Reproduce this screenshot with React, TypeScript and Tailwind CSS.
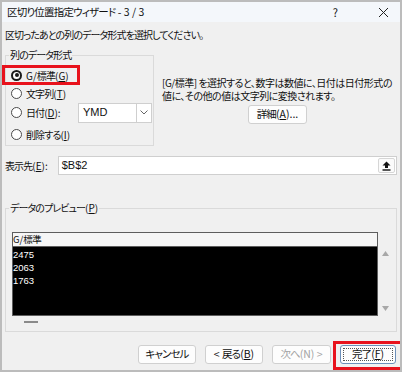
import React from "react";

const jp = "font-['Noto_Sans_CJK_JP','Noto_Sans',sans-serif] [font-feature-settings:'palt']";

function J({ children }: { children: React.ReactNode }) {
  return <span className="tracking-[-0.9px]">{children}</span>;
}

function Radio({ checked }: { checked?: boolean }) {
  if (checked) {
    return (
      <span className="w-[11px] h-[11px] rounded-full border-[2px] border-[#1a1a1a] bg-white flex items-center justify-center shrink-0">
        <span className="w-[4px] h-[4px] rounded-full bg-[#1a1a1a]" />
      </span>
    );
  }
  return <span className="w-[11px] h-[11px] rounded-full border border-[#4a4a4a] bg-white shrink-0" />;
}

function U({ children }: { children: React.ReactNode }) {
  return <span className="underline underline-offset-[1px]">{children}</span>;
}

function Btn({
  children,
  w,
  disabled,
  def,
}: {
  children: React.ReactNode;
  w: string;
  disabled?: boolean;
  def?: boolean;
}) {
  return (
    <div
      className={`${w} h-[19px] rounded-[3px] border ${
        def ? "border-[#6d8fb8]" : "border-[#d0d0d0]"
      } bg-[#fdfdfd] flex items-center justify-center text-[10.5px] leading-none whitespace-pre ${
        disabled ? "text-[#a3a3a3]" : "text-[#111]"
      } relative`}
    >
      {def && <span className="absolute inset-[2px] border border-dotted border-[#555]" />}
      <span className="relative">{children}</span>
    </div>
  );
}

export default function App() {
  return (
    <div
      className={`w-[402px] h-[372px] overflow-hidden border-[2px] border-[#bcbcbc] bg-[#f0f0f0] text-[#111] ${jp} text-[10px] flex flex-col`}
    >
      {/* title bar */}
      <div className="h-[20px] bg-[#f4f7fb] flex items-center pl-[5px] shrink-0">
        <span className="leading-[14px] text-[10.5px] whitespace-pre">
          <span className="tracking-[-0.8px]">区切り位置指定ウィザード</span> - 3 / 3
        </span>
        <span className="ml-auto mr-[40px] text-[11px] leading-none">?</span>
        <svg width="11" height="11" viewBox="0 0 11 11" className="mr-[11px]">
          <path d="M1 1 L10 10 M10 1 L1 10" stroke="#222" strokeWidth="1" />
        </svg>
      </div>

      <div className="flex flex-col px-[3px]">
        <div className="mt-[6px] leading-[14px]">
          <J>区切ったあとの列のデータ形式を選択してください。</J>
        </div>

        {/* group 1 + description */}
        <div className="mt-[6px] flex items-start">
          <fieldset className="w-[149px] border border-[#dadada] p-0 m-0 shrink-0">
            <legend className="ml-[3px] px-[1px] leading-[14px]">
              <J>列のデータ形式</J>
            </legend>
            <div className="pl-[5px] pt-[3px] pb-[1px] flex flex-col">
              <div className="h-[20px] flex items-center gap-[4px] relative">
                <span className="absolute left-[-9px] top-0 w-[78px] h-[20px] border-[3px] border-[#e8121c]" />
                <Radio checked />
                <span>
                  G/<J>標準</J>(<U>G</U>)
                </span>
              </div>
              <div className="h-[17px] flex items-center gap-[4px]">
                <Radio />
                <span>
                  <J>文字列</J>(<U>T</U>)
                </span>
              </div>
              <div className="h-[21px] flex items-center">
                <Radio />
                <span className="ml-[4px] w-[52px]">
                  <J>日付</J>(<U>D</U>):
                </span>
                <div className="w-[74px] h-[20px] bg-white border border-[#cfcfcf] flex items-center">
                  <span className="pl-[4px] flex-1 text-[11px] font-['Liberation_Sans',sans-serif]">YMD</span>
                  <span className="w-[15px] h-full border-l border-[#cfcfcf] flex items-center justify-center">
                    <svg width="8" height="5" viewBox="0 0 8 5">
                      <path d="M0.5 0.5 L4 4 L7.5 0.5" stroke="#666" strokeWidth="1" fill="none" />
                    </svg>
                  </span>
                </div>
              </div>
              <div className="mt-[1px] h-[20px] flex items-center gap-[4px]">
                <Radio />
                <span>
                  <J>削除する</J>(<U>I</U>)
                </span>
              </div>
            </div>
          </fieldset>

          <div className="flex-1 pl-[8px] pt-[28px] flex flex-col">
            <div className="leading-[13px] whitespace-pre tracking-[-0.5px]">
              <div>[G/標準] を選択すると、数字は数値に、日付は日付形式の</div>
              <div>値に、その他の値は文字列に変換されます。</div>
            </div>
            <div className="mt-[3px] flex justify-center pr-[4px]">
              <Btn w="w-[59px]">
                <J>詳細</J>(<U>A</U>)...
              </Btn>
            </div>
          </div>
        </div>

        {/* 表示先 */}
        <div className="mt-[10px] h-[19px] flex items-center">
          <span className="w-[53px]">
            <J>表示先</J>(<U>E</U>):
          </span>
          <div className="w-[341px] h-[19px] bg-white border border-[#cfcfcf] flex items-center">
            <span className="pl-[3px] flex-1 font-['Liberation_Sans',sans-serif] text-[11px]">$B$2</span>
            <span className="w-[17px] h-[15px] mr-[1px] bg-[#fbfbfb] border border-[#d6d6d6] rounded-[2px] flex items-center justify-center">
              <svg width="9" height="10" viewBox="0 0 9 10">
                <path d="M4.5 0.5 L8.5 4.5 L6 4.5 L6 7 L3 7 L3 4.5 L0.5 4.5 Z" fill="#111" />
                <rect x="0.5" y="8.3" width="8" height="1.4" fill="#111" />
              </svg>
            </span>
          </div>
        </div>

        {/* preview */}
        <fieldset className="mt-[26px] border border-[#dadada] p-0 m-0">
          <legend className="ml-[3px] px-[1px] leading-[14px]">
            <J>データのプレビュー</J>(<U>P</U>)
          </legend>
          <div className="pl-[6px] pt-[17px] pb-[8px] flex flex-col">
            <div className="flex">
              <div className="w-[366px] border border-[#5e5e5e] flex flex-col">
                <div className="h-[13px] bg-[#f6f6f6] flex items-center text-[9.5px] leading-none">
                  G/<span className="tracking-[-0.5px]">標準</span>
                </div>
                <div className="h-[69px] bg-black border-t border-[#5e5e5e] text-white text-[9.5px] font-['Liberation_Sans',sans-serif] leading-[13px] pt-[1px]">
                  <div>2475</div>
                  <div>2063</div>
                  <div>1763</div>
                </div>
              </div>
              <div className="w-[14px] flex flex-col items-center justify-between pt-[19px] pb-[5px]">
                <svg width="7" height="5" viewBox="0 0 7 5">
                  <path d="M3.5 0 L7 5 L0 5 Z" fill="#a8a8a8" />
                </svg>
                <svg width="7" height="5" viewBox="0 0 7 5">
                  <path d="M0 0 L7 0 L3.5 5 Z" fill="#a8a8a8" />
                </svg>
              </div>
            </div>
            <div className="mt-[5px] ml-[12px] w-[14px] h-[2px] bg-[#8a8a8a]" />
          </div>
        </fieldset>

        {/* buttons */}
        <div className="mt-[13px] flex justify-end gap-[9px] pr-[1px]">
          <Btn w="w-[58px]">
            <J>キャンセル</J>
          </Btn>
          <Btn w="w-[58px]">
            &lt; <J>戻る</J>(<U>B</U>)
          </Btn>
          <Btn w="w-[59px]" disabled>
            <J>次へ</J>(N) &gt;
          </Btn>
          <div className="relative">
            <span className="absolute left-[-7px] top-[-4px] right-[-8px] bottom-[-6px] border-[3px] border-[#e8121c]" />
            <Btn w="w-[56px]" def>
              <J>完了</J>(<U>F</U>)
            </Btn>
          </div>
        </div>
      </div>
    </div>
  );
}
